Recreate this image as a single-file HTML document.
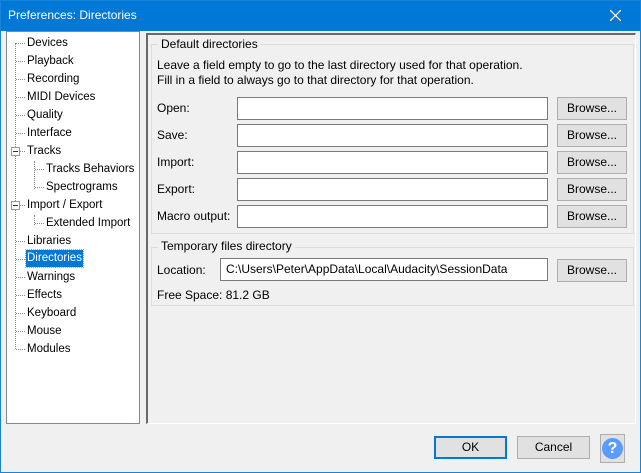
<!DOCTYPE html>
<html><head><style>
*{box-sizing:border-box;margin:0;padding:0}
body{width:641px;height:473px;background:#f0f0f0;font:12px "Liberation Sans",sans-serif;color:#000;position:relative;overflow:hidden}
.a{position:absolute}
.title{left:0;top:0;width:641px;height:31px;background:#0078d7;color:#fff;font-size:12px}
.tree{left:6px;top:31px;width:134px;height:393px;background:#fff;border:1px solid #828790;font-size:11.5px}
.it{position:absolute;white-space:nowrap;line-height:16px;color:#000}
.dh{position:absolute;border-top:1px dotted #888;width:9px}
.dv{position:absolute;border-left:1px dotted #888}
.panel{left:146px;top:32px;width:490px;height:391px;border:1px solid #a0a0a0;border-left:2px solid #696969;border-top:2px solid #696969;border-right-color:#fff;border-bottom-color:#fff}
.grp{position:absolute;border:1px solid #dcdcdc}
.gl{position:absolute;background:#f0f0f0;padding:0 3px;top:-9px;left:6px}
.in{position:absolute;background:#fff;border:1px solid #7a7a7a;height:23px;padding:3px 5px}
.btn{position:absolute;background:#e1e1e1;border:1px solid #adadad;height:23px;text-align:center;line-height:21px}
.lb{position:absolute;white-space:nowrap}
#w{position:absolute;left:0;top:1px;width:641px;height:472px}
</style></head><body>
<div class="a title"><span class="a" style="left:8px;top:8px">Preferences: Directories</span>
<svg class="a" style="left:610px;top:10px" width="11" height="11"><path d="M0 0L11 11M11 0L0 11" stroke="#fff" stroke-width="1.2"/></svg></div>
<div id="w">
<div class="a tree" style="top:30px">
<div class="dv" style="left:8px;top:11px;height:306px"></div>
<div class="dv" style="left:27px;top:129px;height:28px"></div>
<div class="dv" style="left:27px;top:183px;height:10px"></div>
<div class="dh" style="left:9px;top:11px"></div><div class="it" style="left:20px;top:3px">Devices</div>
<div class="dh" style="left:9px;top:29px"></div><div class="it" style="left:20px;top:21px">Playback</div>
<div class="dh" style="left:9px;top:47px"></div><div class="it" style="left:20px;top:39px">Recording</div>
<div class="dh" style="left:9px;top:65px"></div><div class="it" style="left:20px;top:57px">MIDI Devices</div>
<div class="dh" style="left:9px;top:83px"></div><div class="it" style="left:20px;top:75px">Quality</div>
<div class="dh" style="left:9px;top:101px"></div><div class="it" style="left:20px;top:93px">Interface</div>
<div class="dh" style="left:9px;top:119px"></div><div class="it" style="left:20px;top:111px">Tracks</div>
<div class="a" style="left:4px;top:115px;width:9px;height:9px;border:1px solid #999;background:#fff"><div class="a" style="left:1px;top:3px;width:5px;height:1px;background:#333"></div></div>
<div class="dh" style="left:28px;top:137px"></div><div class="it" style="left:39px;top:129px">Tracks Behaviors</div>
<div class="dh" style="left:28px;top:155px"></div><div class="it" style="left:39px;top:147px">Spectrograms</div>
<div class="dh" style="left:9px;top:173px"></div><div class="it" style="left:20px;top:165px">Import / Export</div>
<div class="a" style="left:4px;top:169px;width:9px;height:9px;border:1px solid #999;background:#fff"><div class="a" style="left:1px;top:3px;width:5px;height:1px;background:#333"></div></div>
<div class="dh" style="left:28px;top:191px"></div><div class="it" style="left:39px;top:183px">Extended Import</div>
<div class="dh" style="left:9px;top:209px"></div><div class="it" style="left:20px;top:201px">Libraries</div>
<div class="dh" style="left:9px;top:227px"></div><div class="it" style="left:19px;top:218px;background:#0078d7;color:#fff;padding:0 1px;outline:1px dotted #f90;height:17px">Directories</div>
<div class="dh" style="left:9px;top:245px"></div><div class="it" style="left:20px;top:237px">Warnings</div>
<div class="dh" style="left:9px;top:263px"></div><div class="it" style="left:20px;top:255px">Effects</div>
<div class="dh" style="left:9px;top:281px"></div><div class="it" style="left:20px;top:273px">Keyboard</div>
<div class="dh" style="left:9px;top:299px"></div><div class="it" style="left:20px;top:291px">Mouse</div>
<div class="dh" style="left:9px;top:317px"></div><div class="it" style="left:20px;top:309px">Modules</div>
</div>
<div class="a panel"></div>
<div class="grp" style="left:151px;top:43px;width:483px;height:190px"><div class="gl" style="top:-8px">Default directories</div>
<div class="lb" style="left:5px;top:13px;line-height:15px">Leave a field empty to go to the last directory used for that operation.<br>Fill in a field to always go to that directory for that operation.</div></div>
<div class="lb" style="left:157px;top:100px">Open:</div>
<div class="lb" style="left:157px;top:127px">Save:</div>
<div class="lb" style="left:157px;top:154px">Import:</div>
<div class="lb" style="left:157px;top:181px">Export:</div>
<div class="lb" style="left:157px;top:208px">Macro output:</div>
<div class="in" style="left:237px;top:96px;width:311px"></div>
<div class="in" style="left:237px;top:123px;width:311px"></div>
<div class="in" style="left:237px;top:150px;width:311px"></div>
<div class="in" style="left:237px;top:177px;width:311px"></div>
<div class="in" style="left:237px;top:204px;width:311px"></div>
<div class="btn" style="left:557px;top:96px;width:70px">Browse...</div>
<div class="btn" style="left:557px;top:123px;width:70px">Browse...</div>
<div class="btn" style="left:557px;top:150px;width:70px">Browse...</div>
<div class="btn" style="left:557px;top:177px;width:70px">Browse...</div>
<div class="btn" style="left:557px;top:204px;width:70px">Browse...</div>
<div class="grp" style="left:151px;top:246px;width:483px;height:59px"><div class="gl">Temporary files directory</div></div>
<div class="lb" style="left:157px;top:262px">Location:</div>
<div class="in" style="left:220px;top:257px;width:328px">C:\Users\Peter\AppData\Local\Audacity\SessionData</div>
<div class="btn" style="left:557px;top:258px;width:70px">Browse...</div>
<div class="lb" style="left:157px;top:287px">Free Space: 81.2 GB</div>
<div class="btn" style="left:434px;top:435px;width:73px;border:2px solid #0078d7;line-height:19px">OK</div>
<div class="btn" style="left:517px;top:435px;width:73px">Cancel</div>
<div class="a" style="left:600px;top:433px;width:25px;height:29px;border:1px solid #adadad;background:#e1e1e1"></div>
<div class="a" style="left:602px;top:437px;width:21px;height:21px;border-radius:50%;background:#5b9bff;color:#fff;font-weight:bold;font-size:16px;text-align:center;line-height:21px">?</div>
</div>
<div class="a" style="left:0;top:0;width:641px;height:473px;border:1px solid #1883d7;pointer-events:none"></div>
</body></html>
